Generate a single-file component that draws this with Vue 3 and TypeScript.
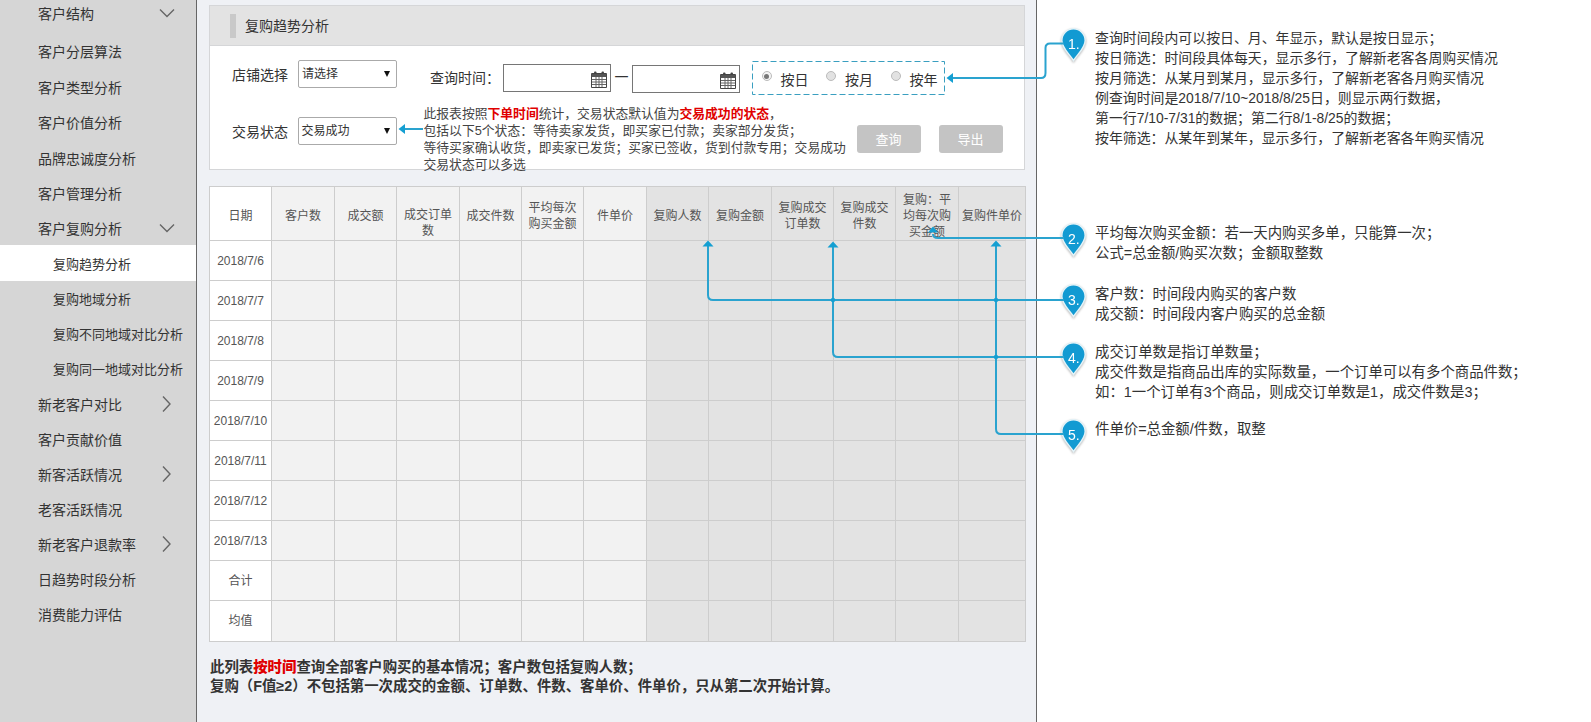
<template>
  <div class="page">
    <aside class="sidebar">
      <div
        v-for="(item, i) in menu"
        :key="item.label"
        :class="['menu-item', { sub: item.sub, active: item.active, first: i === 0, second: i === 1, third: i === 2 }]"
      >
        <span class="menu-label">{{ item.label }}</span>
        <svg v-if="item.arrow === 'down'" class="chev-down" width="16" height="10" viewBox="0 0 16 10">
          <path d="M1 1.5 L8 8.5 L15 1.5" fill="none" stroke="#666" stroke-width="1.4" />
        </svg>
        <svg v-if="item.arrow === 'right'" class="chev-right" width="9" height="16" viewBox="0 0 9 16">
          <path d="M1 0.5 L8 8 L1 15.5" fill="none" stroke="#666" stroke-width="1.4" />
        </svg>
      </div>
    </aside>

    <main class="main">
      <section class="panel">
        <div class="panel-head">
          <i class="head-bar"></i>
          <span class="head-title">复购趋势分析</span>
        </div>
        <div class="row row-one">
          <label class="lbl lbl-shop">店铺选择</label>
          <div class="fake-select sel-shop">请选择<i class="caret"></i></div>
          <label class="lbl lbl-time">查询时间：</label>
          <div class="date-input date-a">
            <svg class="cal" width="16" height="17" viewBox="0 0 16 17">
              <rect x="3" y="0.5" width="2.5" height="4" rx="1" fill="#444" />
              <rect x="10.5" y="0.5" width="2.5" height="4" rx="1" fill="#444" />
              <path d="M0.5 2.5H15.5V16.5H0.5Z" fill="#fff" stroke="#444" />
              <path d="M0.5 3H15.5V6H0.5Z" fill="#555" />
              <path d="M5 6V16M8 6V16M11 6V16M1 8.5H15M1 11H15M1 13.5H15" stroke="#666" />
            </svg>
          </div>
          <span class="dash">一</span>
          <div class="date-input date-b">
            <svg class="cal" width="16" height="17" viewBox="0 0 16 17">
              <rect x="3" y="0.5" width="2.5" height="4" rx="1" fill="#444" />
              <rect x="10.5" y="0.5" width="2.5" height="4" rx="1" fill="#444" />
              <path d="M0.5 2.5H15.5V16.5H0.5Z" fill="#fff" stroke="#444" />
              <path d="M0.5 3H15.5V6H0.5Z" fill="#555" />
              <path d="M5 6V16M8 6V16M11 6V16M1 8.5H15M1 11H15M1 13.5H15" stroke="#666" />
            </svg>
          </div>
          <div class="radio-box">
            <div v-for="(r, i) in ranges" :key="r" class="radio-item">
              <i :class="['radio', { on: i === 0 }]"></i>
              <span>{{ r }}</span>
            </div>
          </div>
        </div>
        <div class="row row-two">
          <label class="lbl lbl-status">交易状态</label>
          <div class="fake-select sel-status">交易成功<i class="caret"></i></div>
          <p class="desc">
            此报表按照<b>下单时间</b>统计，交易状态默认值为<b>交易成功的状态</b>，<br />
            包括以下5个状态：等待卖家发货，即买家已付款；卖家部分发货；<br />
            等待买家确认收货，即卖家已发货；买家已签收，货到付款专用；交易成功<br />
            交易状态可以多选
          </p>
          <button class="btn btn-query">查询</button>
          <button class="btn">导出</button>
        </div>
      </section>

      <table class="grid">
        <colgroup>
          <col v-for="(w, i) in colWidths" :key="i" :style="{ width: w + 'px' }" />
        </colgroup>
        <thead>
          <tr>
            <th v-for="(h, i) in headers" :key="h" :class="[cellClass(i), { 'th-low': h === '成交订单数' }]">{{ h }}</th>
          </tr>
        </thead>
        <tbody>
          <tr v-for="d in rows" :key="d">
            <td class="c-date">{{ d }}</td>
            <td v-for="n in 12" :key="n" :class="cellClass(n)"></td>
          </tr>
        </tbody>
      </table>

      <p class="foot">
        此列表<b>按时间</b>查询全部客户购买的基本情况；客户数包括复购人数；<br />
        复购（F值≥2）不包括第一次成交的金额、订单数、件数、客单价、件单价，只从第二次开始计算。
      </p>
    </main>

    <section class="notes">
      <div v-for="(note, i) in notes" :key="i" :class="['note', 'note-' + (i + 1)]">
        <svg class="pin" width="27" height="36" viewBox="0 0 27 36">
          <path
            d="M13.5 32.5C9 25.5 1.8 20 1.8 12.5A11.7 11.7 0 0 1 25.2 12.5C25.2 20 18 25.5 13.5 32.5Z"
            fill="#129ad2"
            stroke="#e4f3f8"
            stroke-width="1.5"
          />
          <text x="8" y="20.5" class="pin-num">{{ i + 1 }}.</text>
        </svg>
        <div class="note-text">
          <div v-for="line in note" :key="line">{{ line }}</div>
        </div>
      </div>
    </section>

    <svg class="links" width="1591" height="722" viewBox="0 0 1591 722">
      <rect x="752.5" y="61.5" width="192" height="33" fill="none" stroke="#3a9fc0" stroke-dasharray="6 3" />
      <g fill="none" stroke="#2aa3cf" stroke-width="2">
        <path d="M1064 43.5H1050Q1045.5 43.5 1045.5 48V73Q1045.5 78 1041 78H953" />
        <path d="M405 129H423" />
        <path d="M1064 238H938Q933 238 933 234" />
        <path d="M1064 300H713Q708 300 708 295V246" />
        <path d="M1064 357H838Q833 357 833 352V246" />
        <path d="M1064 434H1001Q996 434 996 429V246" />
      </g>
      <g fill="#149fd2">
        <path d="M946.5 78L953 73V83Z" />
        <path d="M398.5 129L405 124V134Z" />
        <path d="M933 226.5L928 232.5H938Z" />
        <path d="M708 240.5L702.5 246.5H713.5Z" />
        <path d="M833 241.5L827.5 247.5H838.5Z" />
        <path d="M996 240.5L990.5 246.5H1001.5Z" />
        <circle cx="833" cy="300" r="2.2" />
        <circle cx="996" cy="300" r="2.2" />
        <circle cx="996" cy="357" r="2.2" />
      </g>
    </svg>
  </div>
</template>

<script setup lang="ts">
interface MenuItem {
  label: string
  sub?: boolean
  active?: boolean
  arrow?: 'down' | 'right'
}

const menu: MenuItem[] = [
  { label: '客户结构', arrow: 'down' },
  { label: '客户分层算法' },
  { label: '客户类型分析' },
  { label: '客户价值分析' },
  { label: '品牌忠诚度分析' },
  { label: '客户管理分析' },
  { label: '客户复购分析', arrow: 'down' },
  { label: '复购趋势分析', sub: true, active: true },
  { label: '复购地域分析', sub: true },
  { label: '复购不同地域对比分析', sub: true },
  { label: '复购同一地域对比分析', sub: true },
  { label: '新老客户对比', arrow: 'right' },
  { label: '客户贡献价值' },
  { label: '新客活跃情况', arrow: 'right' },
  { label: '老客活跃情况' },
  { label: '新老客户退款率', arrow: 'right' },
  { label: '日趋势时段分析' },
  { label: '消费能力评估' }
]

const ranges = ['按日', '按月', '按年']

const colWidths = [62, 63, 62, 63, 62, 62, 63, 62, 63, 62, 62, 63, 67]

const headers = [
  '日期',
  '客户数',
  '成交额',
  '成交订单数',
  '成交件数',
  '平均每次购买金额',
  '件单价',
  '复购人数',
  '复购金额',
  '复购成交订单数',
  '复购成交件数',
  '复购：平均每次购买金额',
  '复购件单价'
]

const rows = [
  '2018/7/6',
  '2018/7/7',
  '2018/7/8',
  '2018/7/9',
  '2018/7/10',
  '2018/7/11',
  '2018/7/12',
  '2018/7/13',
  '合计',
  '均值'
]

const notes: string[][] = [
  [
    '查询时间段内可以按日、月、年显示，默认是按日显示；',
    '按日筛选：时间段具体每天，显示多行，了解新老客各周购买情况',
    '按月筛选：从某月到某月，显示多行，了解新老客各月购买情况',
    '例查询时间是2018/7/10~2018/8/25日，则显示两行数据，',
    '第一行7/10-7/31的数据；第二行8/1-8/25的数据；',
    '按年筛选：从某年到某年，显示多行，了解新老客各年购买情况'
  ],
  ['平均每次购买金额：若一天内购买多单，只能算一次；', '公式=总金额/购买次数；金额取整数'],
  ['客户数：时间段内购买的客户数', '成交额：时间段内客户购买的总金额'],
  [
    '成交订单数是指订单数量；',
    '成交件数是指商品出库的实际数量，一个订单可以有多个商品件数；',
    '如：1一个订单有3个商品，则成交订单数是1，成交件数是3；'
  ],
  ['件单价=总金额/件数，取整']
]

const cellClass = (i: number) => {
  if (i === 0) return 'c-date'
  return i < 7 ? 'c-light' : 'c-dark'
}
</script>

<style>
html,
body {
  margin: 0;
  overflow: hidden;
  background: #fff;
}
</style>

<style scoped>
.page {
  position: relative;
  display: flex;
  width: 1591px;
  height: 722px;
  overflow: hidden;
  font-family: "Liberation Sans", "Noto Sans CJK SC", sans-serif;
  color: #333;
}

/* 左側選單 */
.sidebar {
  flex: none;
  box-sizing: content-box;
  width: 196px;
  height: 722px;
  background: #d6d6d6;
  border-right: 1px solid #666;
}

.menu-item {
  display: flex;
  align-items: center;
  height: 35.15px;
  padding-left: 38px;
  font-size: 14px;
  color: #333;
}

.menu-item.first {
  margin-top: -4.2px;
}

.menu-item.second {
  margin-top: 2.85px;
}

.menu-item.third {
  margin-top: 0.85px;
}

.menu-item.sub {
  padding-left: 53px;
  font-size: 13px;
}

.menu-item.active {
  background: #fff;
}

.menu-label {
  flex: 1;
}

.chev-down {
  margin-right: 21px;
}

.chev-right {
  margin-right: 25px;
}

/* 主區 */
.main {
  flex: none;
  width: 840px;
  height: 722px;
  padding-left: 12px;
  box-sizing: border-box;
  background: #eff1f5;
  border-right: 1px solid #666;
}

.panel {
  box-sizing: border-box;
  width: 816px;
  height: 165px;
  margin-top: 5px;
  background: #fff;
  border: 1px solid #d5d6d8;
}

.panel-head {
  display: flex;
  align-items: center;
  height: 39px;
  padding-left: 20px;
  background: #e3e3e3;
  border-bottom: 1px solid #d5d6d8;
  font-size: 14px;
  color: #333;
}

.head-bar {
  width: 6px;
  height: 24px;
  margin-right: 9px;
  background: #c9c9c9;
}

.head-title {
  margin-bottom: 2px;
}

.row {
  display: flex;
  align-items: flex-start;
}

.row-one {
  padding: 14px 0 0 22px;
  height: 36px;
}

.row-two {
  margin-top: 9px;
  padding-left: 22px;
}

.lbl {
  flex: none;
  font-size: 14px;
  line-height: 20px;
  color: #333;
}

.lbl-shop {
  width: 66px;
  margin-top: 5px;
}

.lbl-time {
  width: 73px;
  margin: 8px 0 0 33px;
}

.lbl-status {
  width: 65.5px;
  margin-top: 17px;
}

.fake-select {
  position: relative;
  flex: none;
  box-sizing: border-box;
  width: 99px;
  height: 28px;
  padding-left: 3px;
  background: #fff;
  border: 1px solid #aaa;
  border-radius: 2px;
  font-size: 12px;
  line-height: 26px;
  color: #333;
}

.sel-status {
  margin-top: 12px;
}

.caret {
  position: absolute;
  top: 10px;
  right: 6px;
  border-top: 6px solid #111;
  border-left: 3px solid transparent;
  border-right: 3px solid transparent;
}

.date-input {
  position: relative;
  flex: none;
  box-sizing: border-box;
  width: 108px;
  height: 28px;
  background: #fff;
  border: 1px solid #767676;
}

.date-a {
  margin-top: 4px;
}

.date-b {
  margin-top: 5px;
}

.cal {
  position: absolute;
  top: 6px;
  right: 3px;
}

.dash {
  flex: none;
  width: 21px;
  margin-top: 7px;
  text-align: center;
  font-size: 14px;
  line-height: 20px;
  color: #333;
}

.radio-box {
  flex: none;
  display: flex;
  box-sizing: border-box;
  width: 193px;
  height: 34px;
  margin: 2px 0 0 12px;
  padding-left: 9.5px;
}

.radio-item {
  flex: none;
  display: flex;
  align-items: flex-start;
  width: 64.5px;
  font-size: 14px;
  line-height: 20px;
  padding-top: 8px;
  color: #333;
}

.radio-item span {
  margin-left: 9px;
}

.radio {
  position: relative;
  flex: none;
  box-sizing: border-box;
  width: 10px;
  height: 10px;
  margin-top: 1px;
  border: 1px solid #bbb;
  border-radius: 50%;
  background: #e2e2e2;
}

.radio.on {
  background: #f4f4f4;
}

.radio.on::after {
  content: '';
  position: absolute;
  inset: 1.5px;
  border-radius: 50%;
  background: #777;
}

.desc {
  flex: none;
  width: 425px;
  margin: 0 0 0 27px;
  font-size: 12.8px;
  line-height: 17px;
  color: #444;
  white-space: nowrap;
}

.desc b {
  color: #e00000;
}

.btn {
  flex: none;
  width: 64px;
  height: 28px;
  margin-top: 20px;
  padding: 0 0 2px;
  border: none;
  border-radius: 3px;
  background: #c4c4c4;
  color: #fff;
  font-family: inherit;
  font-size: 13px;
}

.btn-query {
  margin-left: 8px;
  margin-right: 18px;
}

/* 表格 */
.grid {
  table-layout: fixed;
  width: 817px;
  margin-top: 16px;
  border-collapse: collapse;
  font-size: 12px;
  color: #555;
}

.grid th,
.grid td {
  padding: 0 2px;
  border: 1px solid #cdcdcd;
  text-align: center;
  font-weight: normal;
  line-height: 16px;
  height: 39px;
}

.grid th {
  box-sizing: border-box;
  height: 54px;
  padding-top: 5px;
}

.grid th.th-low {
  padding-top: 19px;
}

.grid tbody tr:last-child td {
  height: 40px;
}

.grid .c-date {
  background: #fff;
}

.grid .c-light {
  background: #f2f2f2;
}

.grid .c-dark {
  background: #e3e3e3;
}

.foot {
  margin: 16px 0 0 1px;
  font-size: 14.4px;
  line-height: 18.5px;
  font-weight: bold;
  color: #333;
}

.foot b {
  color: #e00000;
}

/* 右側註解 */
.notes {
  flex: 1;
  display: flex;
  flex-direction: column;
  padding-left: 24px;
}

.note {
  display: flex;
  align-items: flex-start;
  font-size: 14.4px;
}

.note-1 {
  margin-top: 28px;
  font-size: 13.9px;
}

.note-2 {
  margin-top: 74.6px;
}

.note-3 {
  margin-top: 21.4px;
}

.note-4 {
  margin-top: 17.6px;
}

.note-5 {
  margin-top: 17.4px;
}

.pin {
  flex: none;
  margin-right: 8px;
  margin-left: -1px;
  filter: drop-shadow(0 1px 1px rgba(0, 0, 0, 0.3));
}

.pin-num {
  fill: #fff;
  font-size: 14px;
}

.note-text {
  line-height: 20px;
  color: #333;
  white-space: nowrap;
}

.links {
  position: absolute;
  top: 0;
  left: 0;
  pointer-events: none;
}
</style>
